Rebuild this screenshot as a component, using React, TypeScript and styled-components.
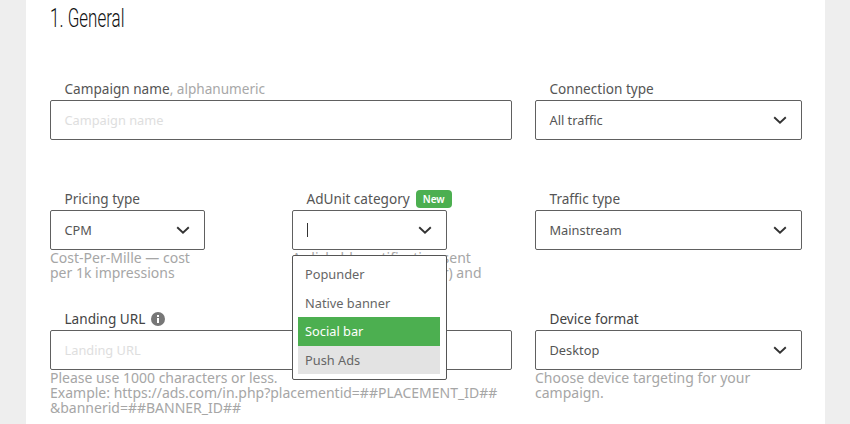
import React from 'react'
import styled, { createGlobalStyle } from 'styled-components'

const GlobalStyle = createGlobalStyle`
html, body {
    margin: 0;
    height: 100%;
    overflow: hidden;
    background: #eeeeee;
    font-family: "Noto Sans", "Open Sans", sans-serif;
}
`

const Page = styled.div`
    padding: 0 25px 0 26px;
    height: 424px;
    box-sizing: border-box;
`

const Card = styled.section`
    position: relative;
    background: #fff;
    height: 100%;
    padding: 0 23px 0 24px;
    overflow: hidden;
`

const Heading = styled.h2`
    margin: 0 0 40px;
    height: 38px;
    line-height: 38px;
    font-family: Roboto, "Liberation Sans", sans-serif;
    font-weight: 300;
    font-size: 25px;
    color: #111;
    white-space: nowrap;
    transform: scaleX(0.68);
    transform-origin: left center;
`

const Row = styled.div<{ $columns: string; $gap: number; $bottom: number }>`
    display: grid;
    grid-template-columns: ${({ $columns }) => $columns};
    column-gap: ${({ $gap }) => $gap}px;
    margin-bottom: ${({ $bottom }) => $bottom}px;
`

const Field = styled.div<{ $width?: number }>`
    position: relative;
    min-width: 0;
    width: ${({ $width }) => ($width ? `${$width}px` : 'auto')};
`

const Label = styled.label<{ $dark?: boolean }>`
    display: flex;
    align-items: center;
    box-sizing: border-box;
    height: 22px;
    padding: 0 0 1px 14.5px;
    font-size: 13.6px;
    white-space: nowrap;
    color: ${({ $dark }) => ($dark ? '#444' : '#555')};
`

const Muted = styled.span`
    color: #a8a8a8;
    white-space: pre;
`

const Box = styled.div`
    display: flex;
    align-items: center;
    justify-content: space-between;
    box-sizing: border-box;
    height: 40px;
    padding: 0 14px 0 13.5px;
    border: 1px solid #606060;
    border-radius: 2px;
    background: #fff;
    font-size: 12.8px;
    color: #555;
`

const Placeholder = styled.span`
    color: #dedede;
`

const Caret = styled.span`
    display: block;
    width: 1px;
    height: 14px;
    background: #333;
`

const Help = styled.p`
    margin: 0;
    font-size: 14px;
    line-height: 15px;
    color: #a6a6a6;
    white-space: nowrap;
`

const Badge = styled.span`
    margin-left: 6px;
    padding: 0 7px;
    height: 18px;
    line-height: 18px;
    border-radius: 4px;
    background: #4caf50;
    color: #fff;
    font-size: 10px;
    font-weight: 600;
`

const InfoIcon = styled.svg`
    margin-left: 5.5px;
    width: 14px;
    height: 14px;
`

const Menu = styled.ul`
    position: absolute;
    z-index: 5;
    top: 67px;
    left: 0;
    width: 155px;
    box-sizing: border-box;
    margin: 0;
    padding: 4px 6px 5px 5px;
    list-style: none;
    background: #fff;
    border: 1px solid #555;
    border-radius: 2px;
`

const MenuItem = styled.li<{ $state?: 'active' | 'hover' }>`
    height: 28.5px;
    line-height: 28.5px;
    padding-left: 7px;
    font-size: 12.8px;
    background: ${({ $state }) =>
        $state === 'active' ? '#4caf50' : $state === 'hover' ? '#e3e3e3' : 'transparent'};
    color: ${({ $state }) => ($state === 'active' ? '#fff' : '#666')};
`

const Chevron = () => (
    <svg width="14" height="8" viewBox="0 0 14 8" fill="none">
        <path d="M1.2 1.2 7 6.6l5.8-5.4" stroke="#333" strokeWidth="1.9" />
    </svg>
)

const Select = ({ value }: { value?: string }) => (
    <Box>
        {value ? <span>{value}</span> : <Caret />}
        <Chevron />
    </Box>
)

const App = () => {
    return (
        <>
            <GlobalStyle />
            <Page>
                <Card>
                    <Heading>1. General</Heading>

                    <Row $columns="462px 267px" $gap={23} $bottom={48}>
                        <Field>
                            <Label>Campaign name<Muted>, alphanumeric</Muted></Label>
                            <Box><Placeholder>Campaign name</Placeholder></Box>
                        </Field>
                        <Field>
                            <Label>Connection type</Label>
                            <Select value="All traffic" />
                        </Field>
                    </Row>

                    <Row $columns="242px 243px 267px" $gap={0} $bottom={28}>
                        <Field $width={155}>
                            <Label>Pricing type</Label>
                            <Select value="CPM" />
                            <Help>Cost-Per-Mille — cost<br />per 1k impressions</Help>
                        </Field>
                        <Field $width={155}>
                            <Label>AdUnit category<Badge>New</Badge></Label>
                            <Select />
                            <Help>A clickable notification sent<br />on user device (browser) and</Help>
                            <Menu>
                                <MenuItem>Popunder</MenuItem>
                                <MenuItem>Native banner</MenuItem>
                                <MenuItem $state="active">Social bar</MenuItem>
                                <MenuItem $state="hover">Push Ads</MenuItem>
                            </Menu>
                        </Field>
                        <Field>
                            <Label>Traffic type</Label>
                            <Select value="Mainstream" />
                        </Field>
                    </Row>

                    <Row $columns="462px 267px" $gap={23} $bottom={0}>
                        <Field>
                            <Label $dark>
                                Landing URL
                                <InfoIcon viewBox="0 0 14 14">
                                    <circle cx="7" cy="7" r="7" fill="#777" />
                                    <rect x="6" y="6" width="2" height="5" fill="#fff" />
                                    <rect x="6" y="3" width="2" height="2" fill="#fff" />
                                </InfoIcon>
                            </Label>
                            <Box><Placeholder>Landing URL</Placeholder></Box>
                            <Help>
                                Please use 1000 characters or less.<br />
                                Example: https://ads.com/in.php?placementid=##PLACEMENT_ID##<br />
                                &amp;bannerid=##BANNER_ID##
                            </Help>
                        </Field>
                        <Field>
                            <Label $dark>Device format</Label>
                            <Select value="Desktop" />
                            <Help>Choose device targeting for your<br />campaign.</Help>
                        </Field>
                    </Row>
                </Card>
            </Page>
        </>
    )
}

export default App
